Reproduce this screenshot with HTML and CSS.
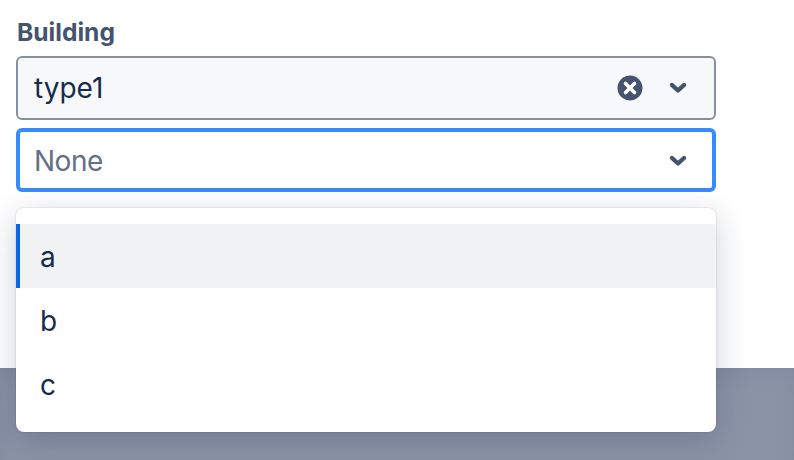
FILE: index.html
```html
<!DOCTYPE html>
<html lang="en">
<head>
  <meta charset="UTF-8">
  <title>Building</title>
  <link rel="stylesheet" href="styles.css">
</head>
<body>
  <div class="panel">
    <label class="label">Building</label>
    <div class="select filled">
      <span class="value">type1</span>
      <svg class="clear" width="28" height="28" viewBox="0 0 28 28">
        <circle cx="14" cy="14" r="12.5" fill="#44546f"/>
        <path d="M9.5 9.5l9 9M18.5 9.5l-9 9" stroke="#fff" stroke-width="3.6" stroke-linecap="round"/>
      </svg>
      <svg class="chevron" width="20" height="14" viewBox="0 0 20 14">
        <path d="M4 4l6 5.5L16 4" fill="none" stroke="#44546f" stroke-width="4.4" stroke-linecap="round" stroke-linejoin="round"/>
      </svg>
    </div>
    <div class="select focused">
      <span class="value placeholder">None</span>
      <svg class="chevron" width="20" height="14" viewBox="0 0 20 14">
        <path d="M4 4l6 5.5L16 4" fill="none" stroke="#44546f" stroke-width="4.4" stroke-linecap="round" stroke-linejoin="round"/>
      </svg>
    </div>
    <ul class="menu">
      <li class="option active">a</li>
      <li class="option">b</li>
      <li class="option">c</li>
    </ul>
  </div>
  <div class="backdrop"></div>
</body>
</html>
```

FILE: styles.css
```css
html, body {
  height: 100%;
}

body {
  margin: 0;
  display: flex;
  flex-direction: column;
  overflow: hidden;
  background-color: #fff;
  color: #172b4d;
  font-family: Inter, "Liberation Sans", sans-serif;
}

.panel {
  position: relative;
  height: 368px;
  flex-shrink: 0;
  box-sizing: border-box;
  width: 700px;
  margin-left: 16px;
  padding-top: 19px;
}

.label {
  display: block;
  height: 37px;
  padding-left: 1px;
  line-height: 27px;
  font-size: 24.6px;
  font-weight: 700;
  color: #44546f;
}

.select {
  display: flex;
  align-items: center;
  box-sizing: border-box;
  height: 64px;
  border-radius: 6px;
  background-color: #fff;
}

.select.filled {
  margin-bottom: 8px;
  padding: 0 26px 0 16px;
  border: 2px solid #8590a2;
  background-color: #f7f8f9;
}

.select.focused {
  padding: 2px 24px 0 14px;
  border: 4px solid #388bff;
}

.value {
  flex: 1;
  font-size: 28px;
  line-height: 36px;
}

.placeholder {
  color: #626f86;
  letter-spacing: -0.5px;
}

.clear {
  margin-right: 24px;
}

.menu {
  position: absolute;
  top: 208px;
  left: 0;
  right: 0;
  margin: 0;
  padding: 16px 0;
  list-style: none;
  background-color: #fff;
  border-radius: 8px;
  box-shadow: 0 0 2px rgba(9, 30, 66, 0.22), 0 8px 32px rgba(9, 30, 66, 0.2);
}

.option {
  height: 64px;
  line-height: 66px;
  padding-left: 24px;
  font-size: 28px;
}

.option.active {
  background-color: #f1f2f4;
  box-shadow: inset 4px 0 0 #0c66e4;
}

.backdrop {
  flex: 1;
  background-color: #8b93a7;
  box-shadow: inset 0 10px 16px rgba(9, 30, 66, 0.06);
}
```
